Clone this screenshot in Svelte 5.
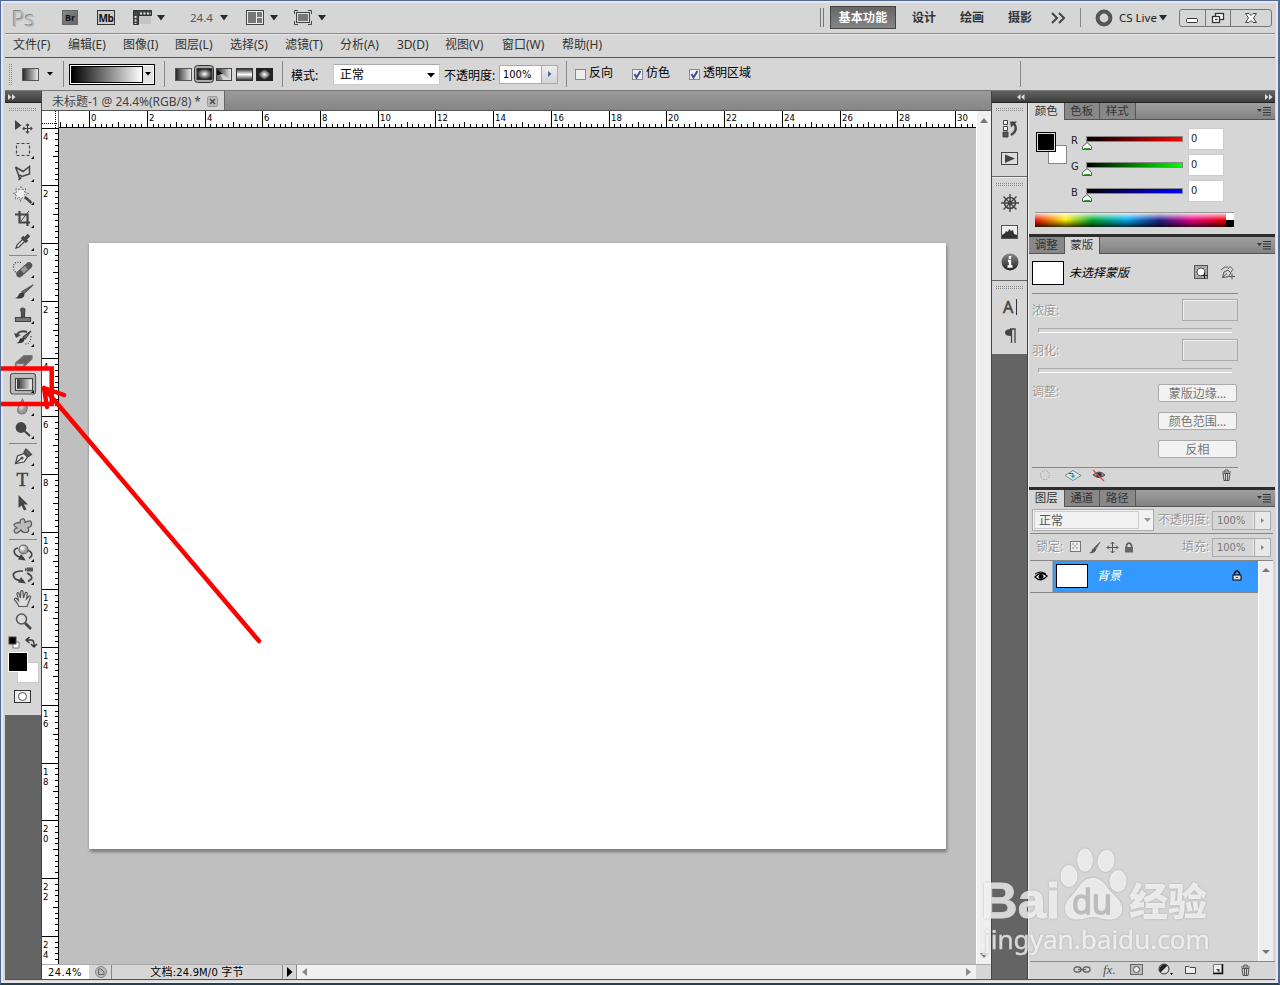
<script>
  const menus = [
    ['文件(F)', 55], ['编辑(E)', 55], ['图像(I)', 52], ['图层(L)', 55], ['选择(S)', 55],
    ['滤镜(T)', 55], ['分析(A)', 57], ['3D(D)', 48], ['视图(V)', 57], ['窗口(W)', 60], ['帮助(H)', 55]
  ];
  const toolGroups = [
    ['move', 'marquee', 'lasso', 'wand', 'crop', 'dropper'],
    ['heal', 'brush', 'stamp', 'history', 'eraser', 'gradient', 'blur', 'dodge'],
    ['pen', 'type', 'select', 'shape'],
    ['rotate3d', 'camera3d', 'hand', 'zoom']
  ];
  const unit = 5.773;
  const range = (from, to) => Array.from({ length: to - from + 1 }, (_, i) => from + i);
  const hTicks = range(-5, 153).map((k) => ({ k, p: Math.round(47.1 + k * unit) }));
  const vTicks = range(-20, 124).map((k) => ({ k, p: Math.round(115 + k * unit) }));
  const channels = [['R', '#f00'], ['G', '#0f0'], ['B', '#00f']];
</script>

{#snippet caret()}
  <svg class="caret" width="8" height="6"><path d="M0 0H8L4 5.500Z" fill="#2a2a2a" /></svg>
{/snippet}

{#snippet menuIcon()}
  <svg class="pmenu" width="14" height="9"><path d="M0 2H5L2.500 5Z" fill="#333" /><path d="M6 .5H14M6 3H14M6 5.500H14M6 8H14" stroke="#333" /></svg>
{/snippet}

{#snippet tool(name)}
  <svg width="28" height="23" viewBox="0 0 28 23" fill="none" stroke="#444" stroke-width="1.2">
    {#if name === 'move'}
      <path d="M6 5V15L12.500 10.500Z" fill="#444" stroke="none" />
      <path d="M18.500 9V18M14 13.500H23M17 10.500L18.500 9L20 10.500M17 16.500L18.500 18L20 16.500M15.500 12L14 13.500L15.500 15M21.500 12L23 13.500L21.500 15" />
    {:else if name === 'marquee'}
      <rect x="7.500" y="5.500" width="13" height="12" stroke-dasharray="3 2" />
    {:else if name === 'lasso'}
      <path d="M6.500 6L14 10.500L20.500 5.500V13L13 15.500Q9 13 10 16T12 16.500L9.500 19M10 15L6.500 6" stroke-width="1.500" />
    {:else if name === 'wand'}
      <path d="M12 3L13.500 6L17 4.500L15.500 8L19 9.500L15.500 11L17 15L13 13.500L11.500 17L10 13.500L6 15L7.500 11L5 9.500L8 8L6.500 4.500L10.500 6Z" fill="#eee" stroke="#777" stroke-dasharray="1 1" />
      <path d="M16 13L22.500 19" stroke-width="2.400" />
    {:else if name === 'crop'}
      <path d="M10.500 4V15.500H21M6 7.500H18.500V19" stroke-width="2.200" /><path d="M12 14L20 4" stroke-width="1" />
    {:else if name === 'dropper'}
      <path d="M7 18L8 15L14 9L16 11L10 17Z" fill="#eee" /><path d="M13 7L18 12M15.500 9.500L20 5" stroke-width="3.500" />
    {:else if name === 'heal'}
      <path d="M10.500 17L20 8.500" stroke-width="6.500" stroke="#555" stroke-linecap="round" /><path d="M13 14.500L17.500 10.500" stroke="#999" stroke-width="4.500" />
      <path d="M12 5.500Q4 4 4.500 11Q5 15 8 15.500" stroke="#333" stroke-dasharray="1 1.500" />
    {:else if name === 'brush'}
      <path d="M24 5L13 11.500L15 13.500Z" fill="#777" stroke="#555" /><path d="M6 18Q9 17.500 10 14Q14 11 15.500 14.500Q15 20 6 18Z" fill="#3a3a3a" stroke="none" />
    {:else if name === 'stamp'}
      <path d="M6.500 14.500H21.500V18.500H6.500Z" fill="#777" /><path d="M12.500 14V9.500Q10.500 5 13.700 5T15.500 9.500V14Z" fill="#555" stroke="#444" />
    {:else if name === 'history'}
      <path d="M22 5L14 11L16 13Z" fill="#777" /><path d="M7 17Q10 17 11 12.500L15 12Q17 18 7 17Z" fill="#333" stroke="none" />
      <path d="M18 6Q12 4 8 8" stroke-width="2" /><path d="M5 7L12 9L7 12Z" fill="#444" stroke="none" /><path d="M22 10Q22 18 16 18" stroke-dasharray="1 1.500" />
    {:else if name === 'eraser'}
      <path d="M6.500 14L15 6.500H23V10L14.500 18H6.500Z" fill="#666" stroke="#777" /><path d="M7 14.500H15V18H7Z" fill="#bbb" stroke="#777" />
    {:else if name === 'gradient'}
      <rect x="1.500" y="1.500" width="25" height="20.500" rx="2.500" fill="#bcbcbc" stroke="#555" />
      <rect x="7.500" y="6.500" width="15" height="11" fill="url(#gradH)" stroke="#eee" /><rect x="6.500" y="6.500" width="17" height="12" stroke="#444" />
    {:else if name === 'blur'}
      <path d="M13.500 4Q14 7 17 10T16 18Q13 20 10 18T10.500 10T13.500 4Z" fill="url(#ball)" stroke="#777" />
    {:else if name === 'dodge'}
      <circle cx="12" cy="9.500" r="4.800" fill="#444" /><path d="M15.500 13L21 18" stroke-width="2.200" />
    {:else if name === 'pen'}
      <path d="M6.500 18.500L8.500 11L15 8.500L18.500 12L15 17Z" fill="#e8e8e8" /><path d="M15 7L19.500 11.500L22.500 9.500L17 4Z" fill="#666" /><path d="M7 18L12 13.500" /><circle cx="13" cy="13" r="1" />
    {:else if name === 'type'}
      <text x="7.500" y="18" class="tglyph">T</text>
    {:else if name === 'select'}
      <path d="M9.500 4V17L12.500 14.500L15 19.500L17.500 18.500L15 13.500H19Z" fill="#444" stroke="none" />
    {:else if name === 'shape'}
      <path d="M13 5Q16 4 16 8.500Q22 5 22.500 9T19 13.500Q21 18.500 17 18.500T12 16Q7 21 5.500 18T8 14Q3 11 6 9.500T11 9Q11 5 13 5Z" fill="#bbb" stroke="#555" />
    {:else if name === 'rotate3d'}
      <path d="M9 7Q4 8 5.500 12T15 17M18 9Q24 11 22.500 15L20 17.500" stroke-width="1.700" /><path d="M12 13L17 19.500L9 18.500Z" fill="#444" stroke="none" /><circle cx="14.500" cy="8.500" r="4.500" fill="url(#ball)" stroke="#666" />
    {:else if name === 'camera3d'}
      <path d="M14 7Q3 7 4.500 12T15 17M18 9Q24 12 22.500 15L19 17.500" stroke-width="1.700" /><path d="M12 13L17 19.500L9 18.500Z" fill="#444" stroke="none" /><path d="M16 3.500L18 5V3.500H24V7.500H18V6L16 7.500Z" fill="#555" stroke="none" />
    {:else if name === 'hand'}
      <path d="M10 19.500Q8 15 5.500 13Q5 10.500 7.500 11.500L9.500 13.500L8 7Q8 5 9.800 6L11.500 11L11.800 4.500Q13 2.500 14 4.500L14.500 11L16.500 5.500Q18.500 5 18.300 7L17.500 12L20 9Q22 8.500 21.500 10.500L18 19.500Z" fill="#ddd" stroke="#555" />
    {:else}
      <circle cx="12.500" cy="9" r="5" fill="#ddd" stroke="#555" stroke-width="1.500" /><path d="M16 13L22 19" stroke-width="2.600" />
    {/if}
    {#if name !== 'move' && name !== 'zoom'}<path d="M25 18V21H22Z" fill="#000" stroke="none" />{/if}
  </svg>
{/snippet}

{#snippet trash()}
  <svg width="11" height="12" fill="none" stroke="#555"><path d="M1 3H10M3.500 2.500L4 1H7L7.500 2.500M2 4.500L3 11.500H8L9 4.500ZM4.500 5V11M6.500 5V11" /></svg>
{/snippet}

<div class="window">
  <svg width="0" height="0" class="defs">
    <defs>
      <linearGradient id="gradH"><stop stop-color="#222" /><stop offset="1" stop-color="#f0f0f0" /></linearGradient>
      <radialGradient id="gradR"><stop stop-color="#fff" /><stop offset="1" stop-color="#222" /></radialGradient>
      <linearGradient id="gradM" x2="0" y2="1"><stop stop-color="#222" /><stop offset=".5" stop-color="#fff" /><stop offset="1" stop-color="#222" /></linearGradient>
      <radialGradient id="ball" cx=".35" cy=".35"><stop stop-color="#fff" /><stop offset="1" stop-color="#999" /></radialGradient>
      <linearGradient id="darkball" x2="0" y2="1"><stop stop-color="#888" /><stop offset="1" stop-color="#222" /></linearGradient>
    </defs>
  </svg>

  <header class="appbar">
    <span class="ps">Ps</span>
    <span class="br">Br</span>
    <span class="mb">Mb</span>
    <svg width="19" height="15"><path d="M.5 .5H18.500V5.500H5.500V14.500H.5Z" fill="#444" stroke="#333" /><path d="M7 3.500H18M2.500 6V14" stroke="#ddd" stroke-width="2" stroke-dasharray="2 1.500" /><rect x="6" y="6" width="12" height="8" fill="#c4c4c4" /></svg>
    {@render caret()}
    <span class="pct">24.4</span>
    {@render caret()}
    <svg width="18" height="15"><rect x=".5" y=".5" width="17" height="14" fill="#eee" stroke="#444" /><path d="M2 2H10V13H2ZM11 2H16V7H11ZM11 8H16V13H11Z" fill="#777" /></svg>
    {@render caret()}
    <svg width="18" height="15" fill="none" stroke="#444"><path d="M.5 4V.5H4M14 .5H17.500V4M17.500 11V14.500H14M4 14.500H.5V11" /><rect x="2.500" y="2.500" width="13" height="10" fill="#777" /><rect x="3.500" y="3.500" width="11" height="8" stroke="#ddd" /></svg>
    {@render caret()}
    <i class="dbl"></i>
    <button class="ws active">基本功能</button>
    <span class="ws">设计</span>
    <span class="ws">绘画</span>
    <span class="ws">摄影</span>
    <svg width="15" height="12" fill="none" stroke="#444" stroke-width="2"><path d="M1 1L6 6L1 11M8 1L13 6L8 11" /></svg>
    <i class="vline"></i>
    <svg width="18" height="18"><circle cx="9" cy="9" r="6.400" fill="none" stroke="#555" stroke-width="4" /></svg>
    <span class="cs">CS Live</span>
    {@render caret()}
    <div class="winbtns">
      <svg width="25" height="17"><rect x="6.500" y="8.500" width="11" height="4" rx="1" fill="#fff" stroke="#333" /></svg>
      <svg width="25" height="17" fill="#fff" stroke="#333" stroke-width="1.300"><rect x="9.500" y="3.500" width="8" height="6" /><rect x="6.500" y="6.500" width="7" height="6" /><path d="M9 9.500H11.500" /></svg>
      <svg width="41" height="17"><path d="M14.500 3.500H18L20 5.500L22 3.500H25.500L22.500 8L25.500 12.500H22L20 10.500L18 12.500H14.500L17.500 8Z" fill="#fff" stroke="#444" /></svg>
    </div>
  </header>

  <nav class="menubar">
    {#each menus as [label, w]}<span style="width:{w}px">{label}</span>{/each}
  </nav>

  <section class="options">
    <i class="grip"></i>
    <svg width="17" height="13"><rect x=".5" y=".5" width="16" height="12" fill="url(#gradH)" stroke="#555" /></svg>
    <svg width="6" height="4"><path d="M0 0H6L3 3.500Z" /></svg>
    <i class="osep"></i>
    <div class="gpick"><i></i><b><svg width="6" height="4"><path d="M0 0H6L3 3.500Z" /></svg></b></div>
    <i class="osep"></i>
    <svg width="17" height="13"><rect x=".5" y=".5" width="16" height="12" fill="url(#gradH)" stroke="#555" /></svg>
    <svg width="20" height="18"><rect x=".5" y=".5" width="19" height="17" rx="3" fill="#aaa" stroke="#333" /><rect x="3" y="3.500" width="15" height="11" fill="url(#gradR)" stroke="#333" /></svg>
    <svg width="17" height="13"><rect x=".5" y=".5" width="15" height="12" fill="url(#gradH)" stroke="#444" /><path d="M1 1V12H13Z" fill="#eee" opacity=".3" /><path d="M1 1L14 12H7Z" fill="#eee" opacity=".6" /><path d="M1 1V7L7 6Z" fill="#111" /></svg>
    <svg width="17" height="13"><rect x=".5" y=".5" width="16" height="12" fill="url(#gradM)" stroke="#333" /></svg>
    <svg width="17" height="13"><rect x=".5" y=".5" width="16" height="12" fill="#222" stroke="#222" /><path d="M2 6.500L8.500 1L15 6.500L8.500 12Z" fill="url(#gradR)" /></svg>
    <i class="osep"></i>
    <span class="lbl low">模式:</span>
    <div class="sel">正常<svg width="8" height="5"><path d="M0 0H8L4 4.500Z" /></svg></div>
    <span class="lbl low">不透明度:</span>
    <div class="num"><span>100%</span><b><svg width="4" height="6"><path d="M0 0L3.500 3L0 6Z" fill="#456a9c" /></svg></b></div>
    <i class="osep"></i>
    <label><i class="cb"></i>反向</label>
    <label><i class="cb"><svg width="9" height="9"><path d="M1.500 4L3.500 7.500L7.500 1" fill="none" stroke="#3a4f95" stroke-width="2" /></svg></i>仿色</label>
    <label><i class="cb"><svg width="9" height="9"><path d="M1.500 4L3.500 7.500L7.500 1" fill="none" stroke="#3a4f95" stroke-width="2" /></svg></i>透明区域</label>
    <i class="osep"></i>
  </section>

  <main>
    <aside class="tools">
      <div class="dark"><svg width="8" height="6"><path d="M0 0L3.500 3L0 6ZM4 0L7.500 3L4 6Z" fill="#ddd" /></svg></div>
      <div class="toolbody">
        <i class="hgrip"></i>
        {#each toolGroups as group, g}
          <div class="tgroup" class:first={g === 0}>{#each group as name}{@render tool(name)}{/each}</div>
        {/each}
        <svg class="swatches" width="36" height="80">
          <path d="M8 9H14V15H8Z" fill="#fff" stroke="#777" /><rect x="4" y="4" width="7" height="7" stroke="#444" />
          <path d="M22 7H26Q29 7 29 11V13M24.500 4L21 7L24.500 10M26 11L29 14L32 11" fill="none" stroke="#333" stroke-width="1.400" />
          <rect x="12.500" y="29.500" width="21" height="20" fill="#fff" stroke="#c8c8c8" /><rect x="3.500" y="19.500" width="19" height="19" fill="#000" stroke="#fff" />
          <rect x="9.500" y="57.500" width="16" height="12" fill="#eee" stroke="#333" /><circle cx="17.500" cy="63.500" r="4" fill="#fff" stroke="#555" />
        </svg>
      </div>
    </aside>

    <section class="doc">
      <div class="tabs"><div class="tab">未标题-1 @ 24.4%(RGB/8) * <span class="close"><svg width="7" height="7"><path d="M1 1L6 6M6 1L1 6" stroke="#444" stroke-width="1.300" /></svg></span></div></div>
      <div class="work">
        <svg class="hr" width="934" height="17">
          <rect width="934" height="17" fill="#fff" />
          <path d="M0 12.500H17M13.500 0V17" stroke="#000" stroke-dasharray="1 1" />
          {#each hTicks as t}
            {#if t.p > 17}<rect x={t.p} y={t.k % 10 === 0 ? 0 : t.k % 5 === 0 ? 11 : 13} width="1" height="17" fill="#000" />{/if}
            {#if t.k % 10 === 0}<text x={t.p + 2} y="10">{t.k / 5}</text>{/if}
          {/each}
          <rect x="17" y="16" width="917" height="1" />
          <rect x="16" width="1" height="17" fill="#777" />
        </svg>
        <div class="vscroll"><svg width="8" height="5"><path d="M0 5H8L4 0Z" fill="#777" /></svg><svg width="8" height="5"><path d="M0 0H8L4 5Z" fill="#777" /></svg></div>
        <svg class="vr" width="17" height="836">
          <rect width="17" height="836" fill="#fff" />
          {#each vTicks as t}
            <rect x={t.k % 10 === 0 ? 0 : t.k % 5 === 0 ? 11 : 13} y={t.p} width="17" height="1" />
            {#if t.k % 10 === 0}
              {#each String(Math.abs(t.k / 5)).split('') as d, i}<text x="1" y={t.p + 12 + i * 10}>{d}</text>{/each}
            {/if}
          {/each}
          <rect x="16" width="1" height="836" /><rect width="17" height="1" />
        </svg>
        <div class="stage"><div class="paper"></div></div>
      </div>
      <footer class="status">
        <span class="zoomv">24.4%</span>
        <span class="sicon"><svg width="12" height="12"><circle cx="6" cy="6" r="5.500" fill="#bbb" stroke="#888" /><path d="M3.500 3H6L9 6V8.500H3.500Z" fill="none" stroke="#666" /></svg></span>
        <span class="info">文档:24.9M/0 字节</span>
        <span class="sbtn"><svg width="6" height="10"><path d="M0 0L5.500 5L0 10Z" /></svg></span>
        <span class="hscroll"><svg width="5" height="8"><path d="M5 0V8L0 4Z" fill="#888" /></svg><svg width="5" height="8"><path d="M0 0V8L5 4Z" fill="#888" /></svg></span>
        <span></span>
      </footer>
    </section>

    <aside class="right">
      <div class="dark both"><svg width="8" height="6"><path d="M3.500 0V6L0 3ZM7.500 0V6L4 3Z" fill="#ddd" /></svg><svg width="8" height="6"><path d="M0 0L3.500 3L0 6ZM4 0L7.500 3L4 6Z" fill="#ddd" /></svg></div>
      <div class="cols">
        <div class="dock">
          <div class="dg g1"><i class="hgrip"></i>
            <svg width="18" height="20" fill="none" stroke="#444"><path d="M2.500 1.500H6.500V5.500H2.500ZM2.500 7.500H6.500V11.500H2.500Z" fill="#fff" /><path d="M2 13H7V18H2Z" fill="#555" /><path d="M10 16Q18 11 12.500 4" stroke-width="2.400" /><path d="M9 2.500H16L10 8.500Z" fill="#444" stroke="none" /></svg>
            <svg width="18" height="14"><rect x=".5" y=".5" width="16" height="12" fill="#ddd" stroke="#444" /><path d="M4 2.500V11L14 6.500Z" fill="#444" /></svg>
          </div>
          <div class="dg g2"><i class="hgrip"></i>
            <svg width="20" height="20" fill="none" stroke="#444"><circle cx="10" cy="10" r="5.500" stroke-width="1.600" /><circle cx="10" cy="10" r="2" fill="#444" /><path d="M10 1V19M1 10H19M3.500 3.500L16.500 16.500M16.500 3.500L3.500 16.500" stroke-width="1.400" /></svg>
            <svg width="18" height="14"><rect x=".5" y=".5" width="16" height="13" fill="#eee" stroke="#555" /><path d="M1 13V10L4 8L5 6L7 7L8 4L10 6L12 5L13 9L16 10V13Z" fill="#333" /></svg>
            <svg width="18" height="18"><circle cx="9" cy="9" r="8.500" fill="url(#darkball)" /><path d="M9 3V6M7 8H9V13M6.500 13.500H11.500" stroke="#fff" stroke-width="2.300" fill="none" /></svg>
          </div>
          <div class="dg g3"><i class="hgrip"></i>
            <svg width="16" height="24"><text x="1" y="18" class="aglyph">A</text><path d="M14.500 4V20" stroke="#333" /></svg>
            <svg width="14" height="16"><path d="M7 1H12V15M8.500 1V15" fill="none" stroke="#444" stroke-width="1.300" /><path d="M8 1V8Q2 8 2 4.500T8 1Z" fill="#444" /></svg>
          </div>
        </div>
        <div class="panels">
          <div class="ptabs"><span class="on">颜色</span><span>色板</span><span>样式</span>{@render menuIcon()}</div>
          <div class="pbody color">
            <svg class="fgbg" width="36" height="34"><rect x="15.500" y="13.500" width="18" height="18" fill="#fff" stroke="#888" /><rect x="3.500" y=".5" width="19" height="19" fill="#000" stroke="#000" /><rect x="4.500" y="1.500" width="17" height="17" fill="#000" stroke="#ddd" /></svg>
            <div class="chs">
              {#each channels as [c, col]}
                <div class="ch"><span>{c}</span><div class="track"><i style="background:linear-gradient(90deg,#000,{col})"></i><svg width="10" height="8"><path d="M5 .5L9.500 4.500V7.500H.5V4.500Z" fill="#fff" stroke="#555" /><path d="M2 6.500H8" stroke="#2a2" /></svg></div><b>0</b></div>
              {/each}
            </div>
            <div class="spectrum"><i></i><b></b></div>
          </div>
          <div class="gap"></div>
          <div class="ptabs"><span>调整</span><span class="on">蒙版</span>{@render menuIcon()}</div>
          <div class="pbody mask">
            <div class="mhead"><i class="thumb"></i><em>未选择蒙版</em>
              <svg width="15" height="15"><rect x=".5" y=".5" width="13" height="13" fill="#aaa" stroke="#555" /><circle cx="7" cy="7" r="4" fill="#fff" stroke="#555" /><path d="M7.500 10.500H13.500M10.500 7.500V13.500" stroke="#222" /></svg>
              <svg width="16" height="15" fill="none" stroke="#555"><path d="M1 5Q4 1 8 2M2.500 12.500L4 7L8 5L11 8L8 12ZM8 4L10 1.500L13 4.500L11 7M3 12L7 8.500M9 11.500H15M12 8.500V14.500" /></svg>
            </div>
            <div class="mrow"><span>浓度:</span><i></i></div><div class="slot"></div>
            <div class="mrow second"><span>羽化:</span><i></i></div><div class="slot"></div>
            <div class="mbtns"><span>调整:</span><div><button>蒙版边缘...</button><button>颜色范围...</button><button>反相</button></div></div>
            <div class="mfoot">
              <svg width="12" height="12"><circle cx="6" cy="6" r="4.500" fill="none" stroke="#888" stroke-dasharray="1 1.500" /></svg>
              <svg width="18" height="13"><path d="M1 6.500L9 1.500L17 6.500L9 11.500Z" fill="#d7eee5" stroke="#789" /><path d="M5 4.500H9V8M7 6.500L9 8.500L11 6.500" fill="none" stroke="#16a" /></svg>
              <svg width="14" height="13"><path d="M1 6Q7 0 13 6Q7 11 1 6Z" fill="#888" stroke="#555" /><circle cx="7" cy="6" r="2.500" fill="#333" /><path d="M1 1L12 12" stroke="#e44" stroke-width="1.300" /></svg>
              {@render trash()}
            </div>
          </div>
          <div class="gap"></div>
          <div class="ptabs"><span class="on">图层</span><span>通道</span><span>路径</span>{@render menuIcon()}</div>
          <div class="pbody layers">
            <div class="lrow a"><div class="lsel"><span>正常</span><svg width="7" height="4"><path d="M0 0H7L3.500 4Z" fill="#999" /></svg></div><span class="dis">不透明度:</span><div class="lnum"><span>100%</span><b><svg width="3" height="5"><path d="M0 0L3 2.500L0 5Z" fill="#888" /></svg></b></div></div>
            <div class="lrow b"><span class="dis">锁定:</span>
              <svg width="12" height="12"><rect x=".5" y=".5" width="10" height="10" fill="#eee" stroke="#777" /><path d="M2 2H4V4H2ZM6 2H8V4H6ZM4 4H6V6H4ZM2 6H4V8H2ZM6 6H8V8H6Z" fill="#bbb" /></svg>
              <svg width="13" height="13"><path d="M12 1L6 7L7.500 8.500Z" fill="#666" stroke="#666" /><path d="M1 12Q4 11 4 8.500Q7 6 8 9Q6 13 1 12Z" fill="#555" /></svg>
              <svg width="13" height="13" fill="none" stroke="#555"><path d="M6.500 1V12M1 6.500H12M4.500 3L6.500 1L8.500 3M4.500 10L6.500 12L8.500 10M3 4.500L1 6.500L3 8.500M10 4.500L12 6.500L10 8.500" /></svg>
              <svg width="10" height="11"><path d="M2.500 5V3Q5 -1 7.500 3V5" fill="none" stroke="#555" stroke-width="1.500" /><rect x="1" y="5" width="8" height="5.500" fill="#666" /></svg>
              <span class="dis fill">填充:</span><div class="lnum"><span>100%</span><b><svg width="3" height="5"><path d="M0 0L3 2.500L0 5Z" fill="#888" /></svg></b></div>
            </div>
            <div class="list">
              <div class="layer"><span class="eye"><svg width="14" height="11"><path d="M1 6Q7 -1 13 5Q7 12 1 6Z" fill="#fff" stroke="#000" stroke-width="1.300" /><circle cx="7" cy="5.500" r="2.500" /><path d="M1 3Q7 -1 12 3" fill="none" stroke="#000" /></svg></span>
                <div class="lname"><i class="thumb"></i><em>背景</em><svg width="10" height="11"><path d="M2.500 5V3Q5 -1 7.500 3V5" fill="none" stroke="#000" stroke-width="1.300" /><rect x="1" y="5" width="8" height="5" fill="#ddd" stroke="#000" /><path d="M4 7.500H6" stroke="#444" /></svg></div></div>
              <div class="lscroll"><svg width="8" height="4"><path d="M0 4H8L4 0Z" fill="#777" /></svg><svg width="8" height="4"><path d="M0 0H8L4 4Z" fill="#777" /></svg></div>
            </div>
            <div class="lfoot">
              <svg width="18" height="9" fill="none" stroke="#666" stroke-width="1.300"><rect x="1" y="2" width="7" height="5" rx="2.500" /><rect x="10" y="2" width="7" height="5" rx="2.500" /><path d="M5 4.500H13" /></svg>
              <span class="fx">fx.</span>
              <svg width="14" height="12"><rect x=".5" y=".5" width="12" height="10" fill="#bbb" stroke="#666" /><circle cx="6.500" cy="5.500" r="3" fill="#eee" stroke="#555" /></svg>
              <svg width="17" height="13"><circle cx="6" cy="6" r="5" fill="#ddd" stroke="#333" /><path d="M2.500 9.500A5 5 0 0 1 9.500 2.500Z" fill="#222" /><path d="M12 10H15L13.500 12Z" /></svg>
              <svg width="12" height="10"><path d="M.5 1.500H4L5 2.500H10.500V8.500H.5Z" fill="#eee" stroke="#444" /></svg>
              <svg width="11" height="11"><path d="M.5 .5H9V9H.5Z" fill="#eee" stroke="#777" /><path d="M3 5H6.500V9Z" fill="#444" /><path d="M9.500 0V9.500H0" stroke="#111" fill="none" stroke-width="1.500" /></svg>
              {@render trash()}
            </div>
          </div>
        </div>
      </div>
    </aside>
  </main>

  <svg class="annot" width="300" height="300" viewBox="0 360 300 300" fill="none" stroke="#f00" stroke-width="4.500" stroke-linecap="round">
    <path d="M0 368.500H51.700V404H0" stroke-linecap="butt" /><path d="M259 641L44 388M44 388L64 395M44 388L47 407" />
  </svg>

  <svg class="mark" width="240" height="120" viewBox="980 840 240 120">
    <g fill="#fff" opacity=".74">
      <text x="981" y="918" class="wb" textLength="79" lengthAdjust="spacingAndGlyphs">Bai</text>
      <ellipse cx="1069" cy="876" rx="8.500" ry="11" /><ellipse cx="1085" cy="860" rx="8" ry="11.500" /><ellipse cx="1106" cy="861" rx="8.500" ry="11" transform="rotate(8 1106 861)" /><ellipse cx="1118" cy="881" rx="8.500" ry="11" />
      <path d="M1093 878C1101 878 1105 884 1109 890C1116 897 1123 902 1122 910C1121 920 1110 921 1100 918Q1093 916 1086 918C1076 921 1065 920 1065 908C1065 900 1073 896 1078 888C1082 882 1086 878 1093 878Z" />
      <text x="1129" y="915" class="wc" textLength="78" lengthAdjust="spacingAndGlyphs">经验</text>
      <text x="984" y="949" class="wu" textLength="226" lengthAdjust="spacingAndGlyphs">jingyan.baidu.com</text>
    </g>
    <text x="1072" y="914" class="wd" textLength="40" lengthAdjust="spacingAndGlyphs">du</text>
  </svg>
</div>

<style>
  :global(body) { overflow: hidden; }
  * { box-sizing: border-box; }
  svg { display: block; flex: none; }
  i { display: block; }
  .defs { position: absolute; }
  .window { position: relative; width: 1280px; height: 985px; display: flex; flex-direction: column; background: #d6d6d6; border: solid #4f6a94; border-width: 1px 2px 2px 1px; border-bottom-color: #264050; font: 12px/16px "Noto Sans", "Noto Sans CJK SC", sans-serif; color: #222; padding: 1px 3px 3px 4px; box-shadow: inset 0 0 0 2px #e8e6ea; overflow: hidden; }
  button { font: inherit; padding: 0; }

  .appbar { height: 32px; flex: none; border-bottom: 1px solid #888; display: grid; align-items: center; justify-items: start;
    grid-template-columns: 50px 35px 36px 24px 33px 30px 26px 24px 24px 24px 502px 10px 82px 48px 48px 43px 29px 15px 24px 40px 20px 93px; padding-left: 7px; }
  .ps { font: 22px/26px "Open Sans", sans-serif; color: #bbb; text-shadow: -1px -1px 0 #888; letter-spacing: -.5px; }
  .br, .mb { width: 16px; height: 15px; background: linear-gradient(135deg, #888, #666); border: 1px solid #666; font: bold 9px/13px "Open Sans"; color: #111; text-align: center; }
  .mb { width: 18px; background: #ccc; font-size: 10px; border-color: #333; line-height: 14px; letter-spacing: -.5px; }
  .pct { font-size: 11.500px; color: #555; }
  .dbl { width: 4px; height: 19px; border: solid #777; border-width: 0 1px; }
  .ws { font-weight: bold; font-size: 12px; color: #333; white-space: nowrap; }
  .active { width: 66px; height: 23px; border: 1px solid #444; background: linear-gradient(#666, #858585); color: #fff; letter-spacing: .2px; }
  .vline { width: 1px; height: 19px; background: #888; }
  .cs { font-size: 11.500px; color: #222; white-space: nowrap; }
  .winbtns { display: flex; width: 93px; height: 18px; border: 1px solid #777; border-radius: 3px; }
  .winbtns svg + svg { border-left: 1px solid #777; }

  .menubar { height: 23px; flex: none; display: flex; padding: 2px 0 0 8px; border-top: 1px solid #e8e8e8; color: #333; white-space: nowrap; }
  .menubar span { flex: none; }

  .options { height: 34px; flex: none; border-top: 1px solid #555; border-bottom: 1px solid #777; display: grid; align-items: center; justify-items: start; padding-left: 4px; white-space: nowrap;
    grid-template-columns: 13px 25px 16px 6px 95px 11px 19px 22px 20px 20px 26px 9px 42px 111px 55px 67px 9px 57px 57px 331px 10px; color: #000; }
  .grip, .hgrip { background: repeating-linear-gradient(#d6d6d6 0 1px, transparent 1px 2px), repeating-linear-gradient(90deg, #888 0 1px, #d6d6d6 1px 2px); }
  .grip { width: 3px; height: 23px; }
  .osep { width: 1px; height: 26px; background: #888; }
  .gpick { width: 86px; height: 21px; border: 1px solid #000; display: flex; background: #fff; padding: 1px; }
  .gpick i { flex: 1; background: linear-gradient(90deg, #000, #fff); border: 1px solid #000; border-right: 0; }
  .gpick b { width: 11px; border: solid #000; border-width: 0 0 0 1px; display: grid; place-items: center; background: #e4e4e4; }
  .low { padding-top: 3px; }
  .sel { width: 107px; height: 21px; background: #fff; border: 1px solid #ccc; border-top-color: #aaa; padding: 2px 4px 0 6px; display: flex; justify-content: space-between; }
  .sel svg { margin-top: 6px; }
  .num { width: 59px; height: 19px; border: 1px solid #aaa; background: #fff; display: flex; font: 11px/17px "DejaVu Sans Condensed", "DejaVu Sans", sans-serif; }
  .num span { width: 41px; padding-left: 3px; }
  .num b { flex: 1; border-left: 1px solid #aaa; background: linear-gradient(#eee, #d4d4d8); display: grid; place-items: center; }
  label { display: flex; align-items: center; gap: 3px; margin-top: -2px; }
  .cb { width: 11px; height: 11px; background: #eee; border: 1px solid #889; margin-top: 2px; }

  main { flex: 1; min-height: 0; display: grid; grid-template-columns: 36px 951px 283px; border-right: 1px solid #555; border-bottom: 1px solid #555; }
  .dark { height: 12px; background: linear-gradient(#636363, #3e3e3e); padding: 3px 3px; border-bottom: 1px solid #222; }
  .both { display: flex; justify-content: space-between; padding: 3px 2px 3px 25px; }
  .tools { background: #646464; }
  .toolbody { height: 612px; background: #d6d6d6; padding: 4px 0 0; }
  .hgrip { width: 28px; height: 4px; margin: 0 4px; }
  .tgroup { padding: 2px 0 0 4px; margin-top: 2px; }
  .tgroup:not(.first)::before { content: ''; display: block; height: 1px; width: 28px; margin-bottom: 1px; margin-top: -2px; background: #888; }
  .tgroup.first { padding-top: 0; margin-top: 4px; }
  .tglyph { font: 19px "Liberation Serif"; fill: #444; stroke: #444; stroke-width: .5; }

  .doc { min-height: 0; display: flex; flex-direction: column; border: solid #444; border-width: 0 1px; }
  .tabs { height: 20px; flex: none; background: linear-gradient(#9a9a9a, #868686); border-bottom: 1px solid #555; }
  .tab { width: 183px; height: 19px; background: #d3d3d3; border-right: 1px solid #666; padding: 3px 0 0 10px; color: #444; display: flex; white-space: pre; letter-spacing: -.04px; line-height: 15px; }
  .close { width: 11px; height: 11px; margin: 2px 0 0 3px; background: #bbb; border: 1px solid #999; border-radius: 2px; display: grid; place-items: center; }
  .work { display: grid; grid-template: 17px 836px / 17px 917px 15px; }
  .work text { font: 9.500px "DejaVu Sans Condensed", "DejaVu Sans", sans-serif; fill: #000; }
  .hr { grid-column: 1 / 3; }
  .vscroll { grid-row: 1 / 3; grid-column: 3; background: #efefef; border-left: 1px solid #fff; display: flex; flex-direction: column; justify-content: space-between; padding: 7px 0 6px 3px; }
  .stage { background: #bfbfbf; padding: 115px 0 0 30px; }
  .paper { width: 857px; height: 606px; background: #fff; box-shadow: 0 0 2px #999, 1px 3px 3px #777; }
  .status { flex: 1; display: grid; grid-template-columns: 47px 23px 171px 14px 679px 15px; border-top: 1px solid #aaa; font: 11px/15px "DejaVu Sans Condensed", "DejaVu Sans", "Noto Sans CJK SC", sans-serif; color: #000; letter-spacing: .2px; overflow: hidden; }
  .zoomv { background: #fff; padding: 0 0 0 6px; letter-spacing: .5px; }
  .sicon { padding: 1px 0 0 6px; border-right: 1px solid #888; }
  .info { text-align: center; border-right: 1px solid #888; }
  .sbtn { padding: 2px 0 0 4px; border-right: 1px solid #888; }
  .hscroll { background: #f0f0f0; display: flex; justify-content: space-between; padding: 3px 5px; }

  .right { min-height: 0; display: flex; flex-direction: column; }
  .right .dark { flex: none; }
  .cols { flex: 1; display: grid; grid-template-columns: 36px 247px; }
  .dock { background: #646464; border-right: 1px solid #444; }
  .dg { background: #d6d6d6; display: flex; flex-direction: column; align-items: center; border-bottom: 1px solid #666; padding-top: 4px; }
  .g1 { height: 74px; } .g2 { height: 104px; border-top: 1px solid #eee; } .g3 { height: 74px; }
  .g1 svg { margin-top: 8px; } .g1 svg + svg { margin-top: 13px; }
  .g2 svg { margin-top: 7px; } .g2 svg:nth-of-type(2) { margin-top: 12px; } .g2 svg:nth-of-type(3) { margin-top: 14px; }
  .g3 svg { margin-top: 6px; } .g3 svg + svg { margin-top: 9px; }
  .aglyph { font: 16px "Noto Sans"; fill: #444; stroke: #444; stroke-width: .5; }
  .panels { border-left: 1px solid #eee; display: flex; flex-direction: column; }
  .ptabs { height: 17px; flex: none; display: flex; background: linear-gradient(#a0a0a0, #828282); border-bottom: 1px solid #555; font-size: 11.500px; }
  .ptabs span { width: 35.500px; height: 16px; text-align: center; border-right: 1px solid #555; color: #333; line-height: 16px; background: #888; }
  .ptabs .on { height: 17px; background: #d6d6d6; }
  .pmenu { margin: 4px 4px 0 auto; }
  .pbody { background: #d6d6d6; flex: none; }
  .gap { height: 3px; flex: none; background: #2c2c2c; }
  .color { height: 114px; display: grid; grid-template-columns: 39px 207px; grid-template-rows: 92px 22px; }
  .fgbg { margin: 12px 0 0 4px; }
  .chs { padding-top: 8px; }
  .ch { display: grid; grid-template-columns: 13px 104px 36px; height: 26px; font: 11px/25px "DejaVu Sans Condensed", "DejaVu Sans"; color: #222; padding-left: 3px; }
  .ch b { background: #fff; height: 22px; border: 1px solid #ccc; font-weight: normal; line-height: 19px; padding-left: 2px; }
  .track { padding-top: 8px; }
  .track i { width: 97px; height: 6px; margin-left: 2px; border: 1px solid #888; }
  .track svg { margin-left: -2px; }
  .spectrum { grid-column: 1 / 3; margin: 0 0 7px 6px; width: 199px; height: 15px; display: flex; border-top: 1px solid #999; }
  .spectrum i { width: 191px; background: linear-gradient(rgba(255,255,255,.85), transparent 50%, rgba(0,0,0,.75)), linear-gradient(90deg, #e10, #fe0 16%, #0a3 30%, #0ae 48%, #228 65%, #e08 82%, #e00); }
  .spectrum b { flex: 1; background: linear-gradient(#fff 50%, #000 50%); }
  .mask { height: 233px; padding: 7px 0 0 3px; }
  .thumb { width: 32px; height: 24px; background: #fff; border: 1px solid #000; }
  .mhead { width: 206px; height: 33px; display: grid; grid-template-columns: 37px 125px 26px 16px; align-items: start; border-bottom: 1px solid #888; }
  .mhead em { color: #000; padding-top: 4px; }
  .mhead svg { margin-top: 4px; }
  .mrow { width: 206px; display: flex; justify-content: space-between; padding-top: 5px; height: 33px; color: #999; text-shadow: 1px 1px #fff; }
  .mrow span { padding-top: 4px; }
  .mrow.second { margin-top: 1px; }
  .mrow i { width: 56px; height: 22px; border: 1px solid #aaa; box-shadow: inset 1px 1px #eee; }
  .slot { height: 5px; width: 194px; margin: 1px 0 0 6px; border: solid #aaa; border-width: 1px 0 0 1px; border-bottom: 1px solid #fff; }
  .mbtns { display: flex; justify-content: space-between; width: 205px; margin-top: 11px; color: #999; height: 83px; }
  .mbtns > span { text-shadow: 1px 1px #fff; }
  .mbtns button { display: block; width: 79px; height: 18px; margin-bottom: 10px; border: 1px solid #aaa; border-radius: 2px; background: #f2f2f2; color: #777; line-height: 15px; }
  .mfoot { width: 206px; border-top: 1px solid #888; display: grid; grid-template-columns: 25px 28px 129px 12px; padding: 1px 0 0 7px; }
  .layers { flex: 1; display: flex; flex-direction: column; padding-left: 1px; }
  .lrow { flex: none; display: grid; align-items: center; border-bottom: 1px solid #888; height: 27px; white-space: nowrap; width: 243px; }
  .a { grid-template-columns: 126px 54px 59px; padding-left: 2px; }
  .b { grid-template-columns: 34px 18px 18px 18px 58px 30px 59px; padding-left: 6px; }
  .dis { color: #999; text-shadow: 1px 1px #fff; }
  .lsel { width: 122px; height: 22px; background: #f2f2f2; border: 1px solid #aaa; padding: 1px; display: flex; align-items: center; }
  .lsel span { width: 105px; height: 18px; border: 1px solid #ccc; padding-left: 4px; color: #555; line-height: 17px; }
  .lsel svg { margin-left: 5px; }
  .lnum { width: 59px; height: 19px; display: flex; border: 1px solid #aaa; font: 11px/17px "DejaVu Sans Condensed", "DejaVu Sans"; color: #777; }
  .lnum span { width: 41px; padding-left: 4px; border: solid #eee; border-width: 0 1px 0 0; }
  .lnum b { flex: 1; border-left: 1px solid #aaa; background: #e8e8e8; display: grid; place-items: center; }
  .list { flex: 1; display: flex; justify-content: space-between; width: 243px; }
  .layer { width: 228px; height: 32px; display: flex; border-bottom: 1px solid #888; }
  .eye { width: 23px; border-right: 1px solid #aaa; display: grid; place-items: center; }
  .lname { width: 205px; background: #39f; display: grid; grid-template-columns: 41px 135px 12px; padding: 3px 0 0 3px; }
  .lname em { color: #fff; padding-top: 4px; } .lname svg { margin-top: 6px; }
  .lscroll { width: 15px; background: #eee; border-left: 1px solid #fff; display: flex; flex-direction: column; justify-content: space-between; padding: 7px 0 7px 3px; }
  .lfoot { flex: none; height: 18px; border-top: 1px solid #888; display: grid; align-items: center; grid-template-columns: 30px 27px 28px 27px 28px 27px 12px; padding: 0 0 2px 43px; }
  .fx { font: italic 13px/14px "Liberation Serif"; color: #555; }
  .annot { position: absolute; left: -1px; top: 359px; }
  .mark { position: absolute; left: 979px; top: 839px; filter: drop-shadow(0 0 1px rgba(100,100,100,.5)); }
  .wb { font: bold 50px "Liberation Sans"; stroke: #fff; stroke-width: .8; }
  .wc { font: 900 38px "Noto Sans CJK SC"; }
  .wu { font: 26px "Noto Sans"; stroke: #fff; stroke-width: .4; }
  .wd { font: 34px "Open Sans"; fill: #bcbcbc; stroke: #bcbcbc; stroke-width: 1.500; }
</style>
